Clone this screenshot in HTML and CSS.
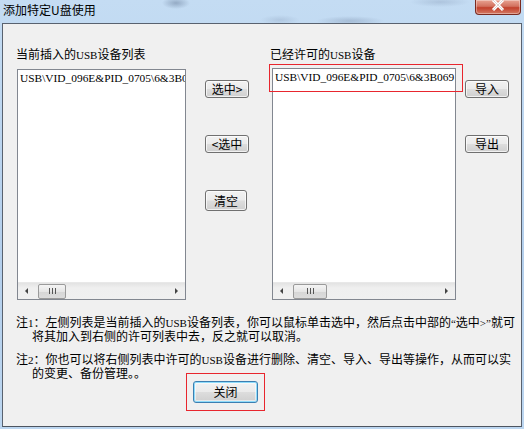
FILE: index.html
```html
<!DOCTYPE html>
<html lang="zh-CN">
<head>
<meta charset="utf-8">
<title>添加特定U盘使用</title>
<link rel="stylesheet" href="styles.css">
</head>
<body>
<div class="window">
  <div class="titlebar">
    <span class="title">添加特定U盘使用</span>
    <div class="close-x">
      <svg width="14" height="11" viewBox="0 0 14 11"><path d="M2 0 L12 10 M12 0 L2 10" stroke="#ffffff" stroke-width="3" fill="none"/><path d="M2 0 L12 10 M12 0 L2 10" stroke="#5a2a2a" stroke-width="0.6" fill="none" opacity="0.35"/></svg>
    </div>
  </div>
  <div class="client">
    <div class="panes">
      <div class="pane pane-left">
        <div class="label">当前插入的<span class="lat">USB</span>设备列表</div>
        <div class="listbox">
          <div class="items"><div class="item">USB\VID_096E&amp;PID_0705\6&amp;3B069</div></div>
          <div class="hscroll">
            <span class="arrow arrow-l"></span>
            <div class="track"><div class="thumb thumb-left"><span class="grip"></span></div></div>
            <span class="arrow arrow-r"></span>
          </div>
        </div>
      </div>
      <div class="btncol btncol-mid">
        <button class="btn">选中&gt;</button>
        <button class="btn">&lt;选中</button>
        <button class="btn btn-clear">清空</button>
      </div>
      <div class="pane pane-right">
        <div class="label">已经许可的<span class="lat">USB</span>设备</div>
        <div class="listbox listbox-right">
          <div class="items"><div class="item">USB\VID_096E&amp;PID_0705\6&amp;3B069</div></div>
          <div class="hscroll">
            <span class="arrow arrow-l"></span>
            <div class="track"><div class="thumb thumb-right"><span class="grip"></span></div></div>
            <span class="arrow arrow-r"></span>
          </div>
        </div>
      </div>
      <div class="btncol btncol-right">
        <button class="btn">导入</button>
        <button class="btn">导出</button>
      </div>
    </div>
    <div class="notes">
      <div class="note">
        <div class="line">注<span class="lat">1</span>：左侧列表是当前插入的<span class="lat">USB</span>设备列表，你可以鼠标单击选中，然后点击中部的<span class="lat">“</span>选中<span class="lat">&gt;”</span>就可</div>
        <div class="line cont">将其加入到右侧的许可列表中去，反之就可以取消。</div>
      </div>
      <div class="note">
        <div class="line">注<span class="lat">2</span>：你也可以将右侧列表中许可的<span class="lat">USB</span>设备进行删除、清空、导入、导出等操作，从而可以实</div>
        <div class="line cont">的变更、备份管理。。</div>
      </div>
    </div>
    <div class="footer">
      <button class="btn btn-close">关闭</button>
    </div>
  </div>
  <div class="annot annot-item"></div>
  <div class="annot annot-close"></div>
</div>
</body>
</html>
```
FILE: styles.css
```css
* { box-sizing: border-box; }
html, body { margin: 0; padding: 0; }
body {
  width: 524px;
  height: 429px;
  overflow: hidden;
  background: #bcd6f0;
  font-family: "Noto Sans CJK SC", "Noto Sans", sans-serif;
  font-size: 12px;
  color: #000;
}
.window {
  position: relative;
  width: 524px;
  height: 429px;
  display: flex;
  flex-direction: column;
  background:
    radial-gradient(ellipse 14px 6px at 176px 3px, rgba(90,110,140,0.45), rgba(90,110,140,0) 100%),
    radial-gradient(ellipse 34px 5px at 350px 21px, rgba(110,130,160,0.35), rgba(110,130,160,0) 100%),
    radial-gradient(ellipse 30px 5px at 440px 2px, rgba(120,140,170,0.3), rgba(120,140,170,0) 100%),
    radial-gradient(ellipse 20px 5px at 280px 20px, rgba(120,140,170,0.25), rgba(120,140,170,0) 100%),
    linear-gradient(#c4dcf3, #b4cfec 60%, #bcd6f0);
}
.titlebar {
  height: 23px;
  flex: none;
  display: flex;
  align-items: flex-start;
  padding-left: 3px;
}
.title {
  font-size: 12px;
  line-height: 12px;
  margin-top: 4px;
  color: #000;
}
.close-x {
  margin-left: auto;
  margin-right: 3px;
  width: 46px;
  height: 15px;
  border: 1px solid #7a2a20;
  border-top: none;
  border-radius: 0 0 4px 4px;
  background: linear-gradient(#e8a392, #d2715f 45%, #c2402c 55%, #d47a64);
  display: flex;
  align-items: center;
  justify-content: center;
  box-shadow: inset 0 0 0 1px rgba(255,255,255,0.35);
}
.close-x svg { margin-top: -3px; }
.client {
  margin: 0 2px;
  height: 404px;
  flex: none;
  background: #f0f0f0;
  border: 1px solid #59626f;
  border-bottom-color: #4d5560;
}
.lat {
  font-family: "Liberation Serif", serif;
  font-size: 11px;
}
.panes {
  display: flex;
  align-items: flex-start;
  padding-top: 22px;
  padding-left: 14px;
}
.pane { display: flex; flex-direction: column; }
.pane-left { width: 169px; }
.pane-right { width: 184px; margin-left: 23px; }
.label {
  height: 16px;
  line-height: 16px;
  white-space: nowrap;
}
.pane-left .label { margin-left: -1px; }
.pane-right .label { margin-left: -2px; }
.listbox {
  margin-top: 7px;
  height: 231px;
  background: #fff;
  border: 1px solid #828790;
  display: flex;
  flex-direction: column;
  overflow: hidden;
}
.listbox-right { margin-top: 6px; height: 232px; }
.items { flex: 1; padding: 1px 0 0 2px; overflow: hidden; }
.item {
  font-family: "Liberation Serif", serif;
  font-size: 11.4px;
  line-height: 14px;
  white-space: nowrap;
}
.hscroll {
  height: 17px;
  flex: none;
  display: flex;
  align-items: center;
  background: linear-gradient(#e3e3e3, #efefef 30%, #f0f0f0);
  border-top: 1px solid #e8e8e8;
}
.arrow { width: 17px; height: 17px; flex: none; display: flex; align-items: center; justify-content: center; }
.arrow::after { content: ""; display: block; width: 0; height: 0; border-top: 3px solid transparent; border-bottom: 3px solid transparent; }
.arrow-l::after { border-right: 3px solid #444; }
.arrow-r::after { border-left: 3px solid #444; }
.track { flex: 1; height: 15px; position: relative; }
.thumb {
  height: 15px;
  margin-left: 3px;
  border: 1px solid #9a9a9a;
  border-radius: 2px;
  background: linear-gradient(#f4f4f4, #e6e6e6 50%, #d6d6d6 51%, #dcdcdc);
  display: flex;
  align-items: center;
  justify-content: center;
}
.thumb-left { width: 28px; }
.thumb-right { width: 34px; }
.grip {
  width: 7px;
  height: 6px;
  background: repeating-linear-gradient(90deg, #555 0 1px, transparent 1px 3px);
}
.btncol { display: flex; flex-direction: column; align-items: flex-start; }
.btncol-mid { margin-left: 19px; margin-top: 34px; gap: 37px; }
.btncol-right { margin-left: 9px; margin-top: 34px; gap: 37px; }
.btn {
  font-family: "Noto Sans CJK SC", sans-serif;
  font-size: 12px;
  line-height: 14px;
  width: 44px;
  height: 18px;
  padding: 0;
  color: #000;
  border: 1px solid #707070;
  border-radius: 3px;
  background: linear-gradient(#f2f2f2, #ebebeb 48%, #dddddd 52%, #cfcfcf);
  box-shadow: inset 0 0 0 1px rgba(255,255,255,0.7);
}
.btn-clear { width: 42px; height: 21px; margin-top: 0; }
.notes {
  margin-top: 15px;
  padding-left: 13px;
}
.note + .note { margin-top: 9px; }
.line {
  line-height: 14px;
  height: 14px;
  white-space: nowrap;
}
.line.cont { padding-left: 16px; }
.footer {
  padding-left: 190px;
  margin-top: 1px;
}
.btn-close {
  width: 65px;
  height: 22px;
  border: 1px solid #3c7fb1;
  box-shadow: inset 0 0 0 1px #8fdcfb, inset 0 0 0 2px rgba(255,255,255,0.5);
  background: linear-gradient(#f2f2f2, #ebebeb 48%, #dddddd 52%, #cfcfcf);
}
.annot {
  position: absolute;
  border: 1px solid #e8262e;
  pointer-events: none;
}
.annot-item { left: 269px; top: 64px; width: 194px; height: 28px; }
.annot-close { left: 186px; top: 373px; width: 79px; height: 38px; }
```
